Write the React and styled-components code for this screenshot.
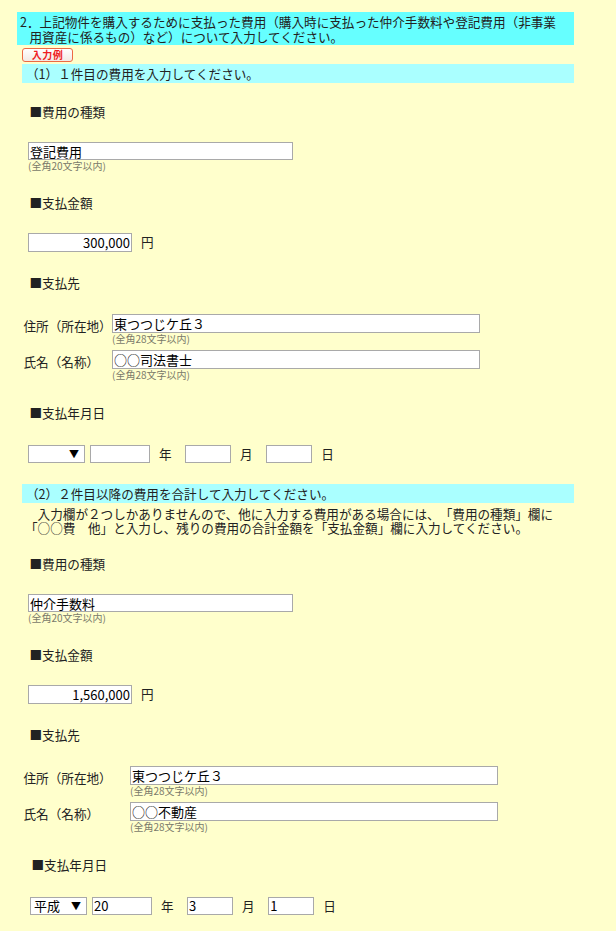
import React from "react";
import styled, { createGlobalStyle } from "styled-components";

const GlobalStyle = createGlobalStyle`
  html, body {
    margin: 0;
    padding: 0;
    background: #ffffcc;
  }
  body {
    font-family: "Noto Sans CJK JP", "Noto Sans", sans-serif;
    color: #222;
    text-spacing-trim: space-all;
  }
`;

const FONT = `"Noto Sans CJK JP", "Noto Sans", sans-serif`;

function CostBlock({ kind, amount, address, name, era, year, month, day, partyLabelW, shift }) {
    return (
        <>
            <Label $top={21}>■費用の種類</Label>
            <Control $top={22}>
                <Stack>
                    <TextBox $w={265} $h={18} defaultValue={kind} readOnly />
                    <Note>(全角20文字以内)</Note>
                </Stack>
            </Control>

            <Label $top={23}>■支払金額</Label>
            <Control $top={22}>
                <TextBox $w={104} $h={19} $right defaultValue={amount} readOnly />
                <Unit>円</Unit>
            </Control>

            <Label $top={23}>■支払先</Label>
            <PartyRow $labelW={partyLabelW} $top={23}>
                <PartyLabel>住所（所在地）</PartyLabel>
                <Stack>
                    <TextBox $w={368} $h={19} defaultValue={address} readOnly />
                    <Note>(全角28文字以内)</Note>
                </Stack>
            </PartyRow>
            <PartyRow $labelW={partyLabelW} $top={5}>
                <PartyLabel>氏名（名称）</PartyLabel>
                <Stack>
                    <TextBox $w={368} $h={19} defaultValue={name} readOnly />
                    <Note>(全角28文字以内)</Note>
                </Stack>
            </PartyRow>

            <Label $top={24} $shift={shift}>■支払年月日</Label>
            <Control $top={23} $shift={shift}>
                <SelectBox>
                    <span>{era}</span>
                    <Arrow>▼</Arrow>
                </SelectBox>
                <TextBox $w={60} $h={18} $gap={5} defaultValue={year} readOnly />
                <DateUnit>年</DateUnit>
                <TextBox $w={46} $h={18} defaultValue={month} readOnly />
                <DateUnit>月</DateUnit>
                <TextBox $w={46} $h={18} defaultValue={day} readOnly />
                <DateUnit>日</DateUnit>
            </Control>
        </>
    );
}

export default function App() {
    return (
        <Page>
            <GlobalStyle />
            <Title>
                2．上記物件を購入するために支払った費用（購入時に支払った仲介手数料や登記費用（非事業<br />
                用資産に係るもの）など）について入力してください。
            </Title>
            <Section>
                <ExampleButton type="button">入力例</ExampleButton>
                <SubHeader $top={2}>（1）１件目の費用を入力してください。</SubHeader>
                <CostBlock
                    kind="登記費用"
                    amount="300,000"
                    address="東つつじケ丘３"
                    name="○○司法書士"
                    era=""
                    year=""
                    month=""
                    day=""
                    partyLabelW={88.5}
                    shift={0}
                />

                <SubHeader $top={21}>（2）２件目以降の費用を合計して入力してください。</SubHeader>
                <Guide>
                    {"\u3000入力欄が２つしかありませんので、他に入力する費用がある場合には、「費用の種類」欄に"}<br />
                    「○○費　他」と入力し、残りの費用の合計金額を「支払金額」欄に入力してください。
                </Guide>
                <CostBlock
                    kind="仲介手数料"
                    amount="1,560,000"
                    address="東つつじケ丘３"
                    name="○○不動産"
                    era="平成"
                    year="20"
                    month="3"
                    day="1"
                    partyLabelW={106.5}
                    shift={2}
                />
            </Section>
        </Page>
    );
}

const Page = styled.div`
    min-height: 931px;
    box-sizing: border-box;
    padding: 12px 0 20px 16.5px;
    background: #ffffcc;
    font-size: 12.6px;
    font-family: ${FONT};
`;

const Title = styled.div`
    width: 557px;
    box-sizing: border-box;
    padding: 2px 0 1px 13px;
    text-indent: -9.5px;
    line-height: 15px;
    white-space: nowrap;
    background: #66ffff;
    font-size: 12.6px;
`;

const Section = styled.div`
    margin-left: 5.5px;
    width: 552px;
`;

const ExampleButton = styled.button`
    display: block;
    box-sizing: border-box;
    margin-top: 3px;
    width: 51px;
    height: 14px;
    padding: 0;
    border: 1px solid #ec6a44;
    border-radius: 3px;
    background: linear-gradient(#ffffff, #f3e9e4);
    color: #ee1c24;
    font: bold 10px ${FONT};
    line-height: 12px;
    letter-spacing: 0.5px;
`;

const SubHeader = styled.div`
    margin-top: ${p => p.$top}px;
    height: 19px;
    line-height: 19px;
    padding-left: 4px;
    white-space: nowrap;
    background: #aaffff;
`;

const Guide = styled.div`
    margin: 4px 0 0 3px;
    line-height: 14px;
    white-space: nowrap;
`;

const Label = styled.div`
    margin-top: ${p => p.$top}px;
    margin-left: ${p => 7.5 + (p.$shift || 0)}px;
    line-height: 16px;
`;

const Control = styled.div`
    margin-top: ${p => p.$top}px;
    margin-left: ${p => 6 + (p.$shift || 0)}px;
    display: flex;
    align-items: center;
`;

const Stack = styled.div`
    display: flex;
    flex-direction: column;
    align-items: flex-start;
`;

const TextBox = styled.input`
    box-sizing: border-box;
    width: ${p => p.$w}px;
    height: ${p => p.$h}px;
    margin: 0 0 0 ${p => p.$gap || 0}px;
    padding: 0 1px;
    border: 1px solid #a9a9a9;
    border-radius: 0;
    background: #fff;
    color: #000;
    font: 13px ${FONT};
    line-height: 14px;
    text-align: ${p => (p.$right ? "right" : "left")};
    outline: none;
`;

const Note = styled.div`
    font-size: 10px;
    line-height: 12px;
    color: #7a7a6a;
`;

const Unit = styled.span`
    margin-left: 9px;
    margin-top: -3px;
`;

const DateUnit = styled.span`
    margin: 0 13.5px 0 9px;
`;

const PartyRow = styled.div`
    margin-top: ${p => p.$top}px;
    margin-left: 1.5px;
    display: grid;
    grid-template-columns: ${p => p.$labelW}px auto;
    align-items: start;
`;

const PartyLabel = styled.div`
    line-height: 19px;
    padding-top: 2px;
    white-space: nowrap;
`;

const SelectBox = styled.div`
    box-sizing: border-box;
    width: 57px;
    height: 18px;
    display: flex;
    align-items: center;
    justify-content: space-between;
    padding: 0 5px 0 3px;
    border: 1px solid #a9a9a9;
    background: #fff;
    font-size: 13px;
    color: #000;
`;

const Arrow = styled.span`
    font-size: 10px;
    line-height: 1;
`;
